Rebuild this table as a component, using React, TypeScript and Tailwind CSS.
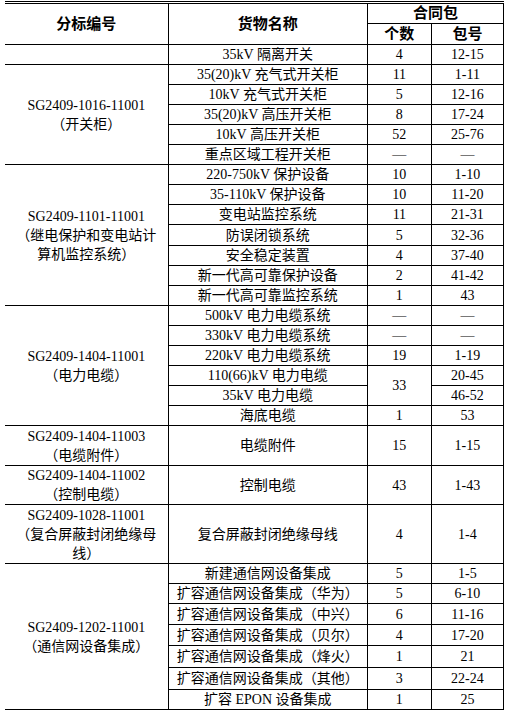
import React from 'react'

type Group = { lines: string[]; span: number }

type Row = {
  h: string
  group?: Group
  name: string
  count: string | null
  countSpan?: number
  pkg: string
}

const DASH = '—'

const rows: Row[] = [
  { h: 'h-[20px]', group: { lines: [], span: 1 }, name: '35kV 隔离开关', count: '4', pkg: '12-15' },
  { h: 'h-[20px]', group: { lines: ['SG2409-1016-11001', '（开关柜）'], span: 5 }, name: '35(20)kV 充气式开关柜', count: '11', pkg: '1-11' },
  { h: 'h-[20px]', name: '10kV 充气式开关柜', count: '5', pkg: '12-16' },
  { h: 'h-[20px]', name: '35(20)kV 高压开关柜', count: '8', pkg: '17-24' },
  { h: 'h-[20px]', name: '10kV 高压开关柜', count: '52', pkg: '25-76' },
  { h: 'h-[20px]', name: '重点区域工程开关柜', count: DASH, pkg: DASH },
  {
    h: 'h-[20px]',
    group: { lines: ['SG2409-1101-11001', '（继电保护和变电站计', '算机监控系统）'], span: 7 },
    name: '220-750kV 保护设备',
    count: '10',
    pkg: '1-10',
  },
  { h: 'h-[20px]', name: '35-110kV 保护设备', count: '10', pkg: '11-20' },
  { h: 'h-[20px]', name: '变电站监控系统', count: '11', pkg: '21-31' },
  { h: 'h-[21px]', name: '防误闭锁系统', count: '5', pkg: '32-36' },
  { h: 'h-[20px]', name: '安全稳定装置', count: '4', pkg: '37-40' },
  { h: 'h-[20px]', name: '新一代高可靠保护设备', count: '2', pkg: '41-42' },
  { h: 'h-[19px]', name: '新一代高可靠监控系统', count: '1', pkg: '43' },
  { h: 'h-[20px]', group: { lines: ['SG2409-1404-11001', '（电力电缆）'], span: 6 }, name: '500kV 电力电缆系统', count: DASH, pkg: DASH },
  { h: 'h-[20px]', name: '330kV 电力电缆系统', count: DASH, pkg: DASH },
  { h: 'h-[20px]', name: '220kV 电力电缆系统', count: '19', pkg: '1-19' },
  { h: 'h-[20px]', name: '110(66)kV 电力电缆', count: '33', countSpan: 2, pkg: '20-45' },
  { h: 'h-[19px]', name: '35kV 电力电缆', count: null, pkg: '46-52' },
  { h: 'h-[20px]', name: '海底电缆', count: '1', pkg: '53' },
  { h: 'h-[40px]', group: { lines: ['SG2409-1404-11003', '（电缆附件）'], span: 1 }, name: '电缆附件', count: '15', pkg: '1-15' },
  { h: 'h-[37px]', group: { lines: ['SG2409-1404-11002', '（控制电缆）'], span: 1 }, name: '控制电缆', count: '43', pkg: '1-43' },
  {
    h: 'h-[59px]',
    group: { lines: ['SG2409-1028-11001', '（复合屏蔽封闭绝缘母', '线）'], span: 1 },
    name: '复合屏蔽封闭绝缘母线',
    count: '4',
    pkg: '1-4',
  },
  { h: 'h-[20px]', group: { lines: ['SG2409-1202-11001', '（通信网设备集成）'], span: 7 }, name: '新建通信网设备集成', count: '5', pkg: '1-5' },
  { h: 'h-[20px]', name: '扩容通信网设备集成（华为）', count: '5', pkg: '6-10' },
  { h: 'h-[21px]', name: '扩容通信网设备集成（中兴）', count: '6', pkg: '11-16' },
  { h: 'h-[21px]', name: '扩容通信网设备集成（贝尔）', count: '4', pkg: '17-20' },
  { h: 'h-[22px]', name: '扩容通信网设备集成（烽火）', count: '1', pkg: '21' },
  { h: 'h-[22px]', name: '扩容通信网设备集成（其他）', count: '3', pkg: '22-24' },
  { h: 'h-[21px]', name: '扩容 EPON 设备集成', count: '1', pkg: '25' },
]

const cell = 'border border-black p-0 text-center align-middle'

// the browser trims full-width brackets, so each one gets its own 1em box
function Text({ s }: { s: string }) {
  const parts = s.split(/([（）])/)
  return (
    <>
      {parts.map((p, i) =>
        p === '（' || p === '）' ? (
          <span key={i} className="inline-block w-[1em] text-center">
            {p}
          </span>
        ) : (
          <React.Fragment key={i}>{p}</React.Fragment>
        ),
      )}
    </>
  )
}

export default function App() {
  return (
    <div className="min-h-[710px] w-[508px] bg-white pl-[5px] pt-px font-['Liberation_Serif','Noto_Sans_CJK_SC',serif] text-[14px] leading-[19px] text-black">
      <table className="w-[499px] table-fixed border-collapse border-y-[3px] border-double border-black">
        <colgroup>
          <col className="w-[163px]" />
          <col className="w-[199px]" />
          <col className="w-[64px]" />
          <col className="w-[72px]" />
        </colgroup>
        <thead>
          <tr className="h-[19px]">
            <th rowSpan={2} className={`${cell} border-l-0 border-t-[3px] border-double text-[15px] font-bold`}>
              分标编号
            </th>
            <th rowSpan={2} className={`${cell} border-t-[3px] border-double text-[15px] font-bold`}>
              货物名称
            </th>
            <th colSpan={2} className={`${cell} border-t-[3px] border-double text-[15px] font-bold`}>
              合同包
            </th>
          </tr>
          <tr className="h-[21px]">
            <th className={`${cell} text-[15px] font-bold`}>个数</th>
            <th className={`${cell} text-[15px] font-bold`}>包号</th>
          </tr>
        </thead>
        <tbody>
          {rows.map((r, idx) => (
            <tr key={idx} className={r.h}>
              {r.group ? (
                <td rowSpan={r.group.span} className={`${cell} border-l-0`}>
                  {r.group.lines.map((l, i) => (
                    <div key={i} className="whitespace-nowrap">
                      <Text s={l} />
                    </div>
                  ))}
                </td>
              ) : null}
              <td className={`${cell} whitespace-nowrap`}>
                <Text s={r.name} />
              </td>
              {r.count !== null ? (
                <td rowSpan={r.countSpan || 1} className={cell}>
                  {r.count}
                </td>
              ) : null}
              <td className={cell}>{r.pkg}</td>
            </tr>
          ))}
        </tbody>
      </table>
    </div>
  )
}
